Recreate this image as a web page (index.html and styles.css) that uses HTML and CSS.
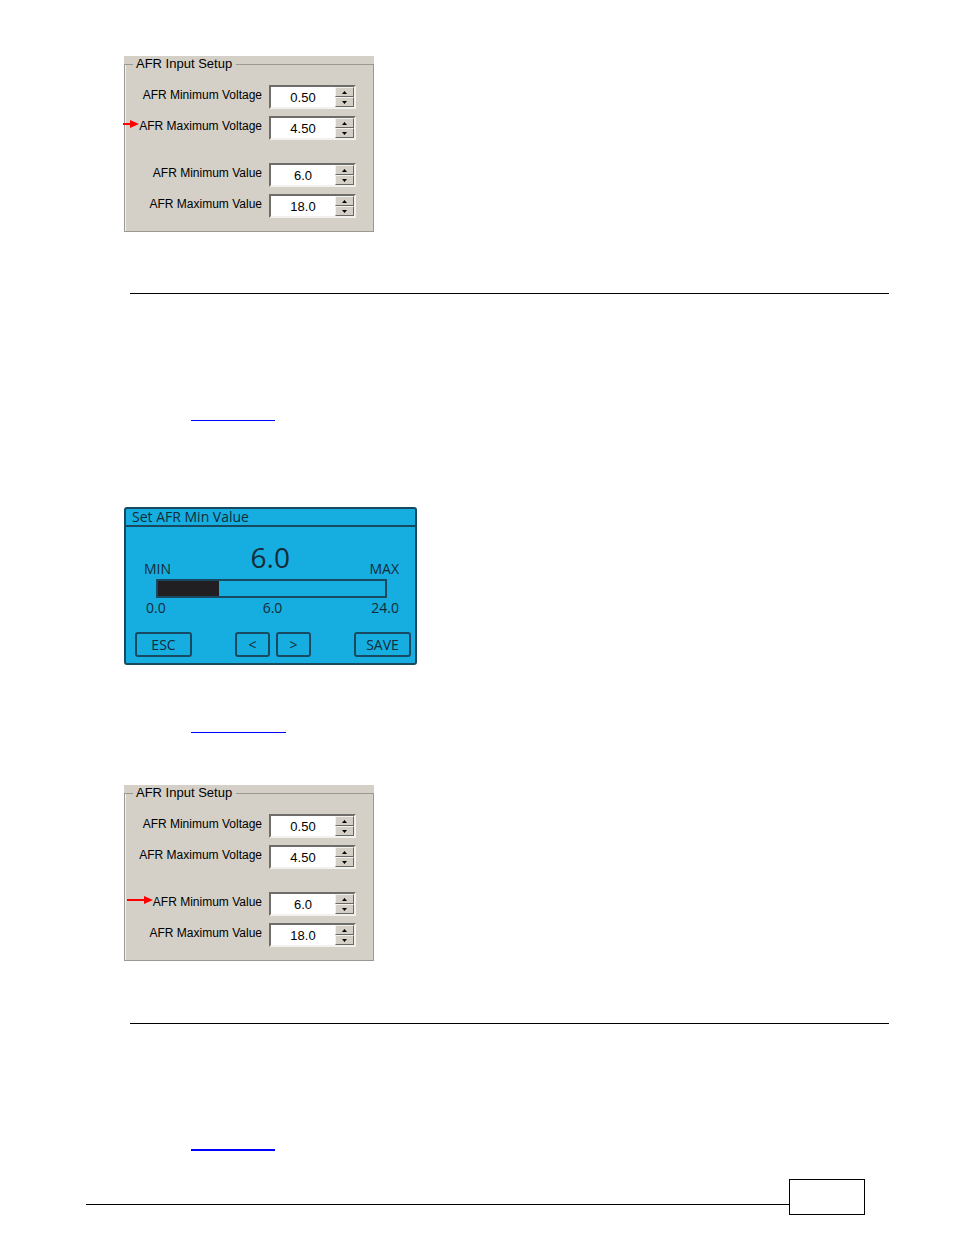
FILE: index.html
```html
<!DOCTYPE html>
<html lang="en">
<head>
<meta charset="utf-8">
<title>AFR Input Setup</title>
<link rel="stylesheet" href="styles.css">
</head>
<body>
<main class="page">
  <form class="panel">
    <fieldset class="group">
      <legend class="group-title">AFR Input Setup</legend>
      <div class="row">
        <label class="label" for="a1">AFR Minimum Voltage</label>
        <div class="spin"><input class="value" id="a1" type="text" value="0.50"><div class="steps"><button class="step" type="button" aria-label="Increase"><svg viewBox="0 0 5 3"><path d="M0 3L2.500 0L5 3Z"/></svg></button><button class="step" type="button" aria-label="Decrease"><svg viewBox="0 0 5 3"><path d="M0 0L2.500 3L5 0Z"/></svg></button></div></div>
      </div>
      <div class="row">
        <label class="label" for="a2"><svg class="arrow arrow-short" viewBox="0 0 16 8"><path d="M0 3H7V0L16 4L7 8V5H0Z"/></svg>AFR Maximum Voltage</label>
        <div class="spin"><input class="value" id="a2" type="text" value="4.50"><div class="steps"><button class="step" type="button" aria-label="Increase"><svg viewBox="0 0 5 3"><path d="M0 3L2.500 0L5 3Z"/></svg></button><button class="step" type="button" aria-label="Decrease"><svg viewBox="0 0 5 3"><path d="M0 0L2.500 3L5 0Z"/></svg></button></div></div>
      </div>
      <div class="row row-spaced">
        <label class="label" for="a3">AFR Minimum Value</label>
        <div class="spin"><input class="value" id="a3" type="text" value="6.0"><div class="steps"><button class="step" type="button" aria-label="Increase"><svg viewBox="0 0 5 3"><path d="M0 3L2.500 0L5 3Z"/></svg></button><button class="step" type="button" aria-label="Decrease"><svg viewBox="0 0 5 3"><path d="M0 0L2.500 3L5 0Z"/></svg></button></div></div>
      </div>
      <div class="row">
        <label class="label" for="a4">AFR Maximum Value</label>
        <div class="spin"><input class="value" id="a4" type="text" value="18.0"><div class="steps"><button class="step" type="button" aria-label="Increase"><svg viewBox="0 0 5 3"><path d="M0 3L2.500 0L5 3Z"/></svg></button><button class="step" type="button" aria-label="Decrease"><svg viewBox="0 0 5 3"><path d="M0 0L2.500 3L5 0Z"/></svg></button></div></div>
      </div>
    </fieldset>
  </form>

  <hr class="rule">
  <a class="link" href="#lcd" aria-label="LCD display"></a>

  <section class="lcd" id="lcd">
    <h2 class="lcd-title">Set AFR Min Value</h2>
    <div class="lcd-head"><span>MIN</span><output class="lcd-value">6.0</output><span>MAX</span></div>
    <div class="bar" role="meter" aria-label="AFR Min Value" aria-valuemin="0" aria-valuemax="24" aria-valuenow="6"><div class="bar-fill" style="width:27%"></div></div>
    <div class="lcd-scale"><span>0.0</span><span>6.0</span><span>24.0</span></div>
    <div class="lcd-actions">
      <button class="key" type="button">ESC</button>
      <div class="key-pair"><button class="key key-small" type="button">&lt;</button><button class="key key-small" type="button">&gt;</button></div>
      <button class="key" type="button">SAVE</button>
    </div>
  </section>

  <a class="link link-wide" href="#software" aria-label="Software setup"></a>

  <form class="panel" id="software">
    <fieldset class="group">
      <legend class="group-title">AFR Input Setup</legend>
      <div class="row">
        <label class="label" for="b1">AFR Minimum Voltage</label>
        <div class="spin"><input class="value" id="b1" type="text" value="0.50"><div class="steps"><button class="step" type="button" aria-label="Increase"><svg viewBox="0 0 5 3"><path d="M0 3L2.500 0L5 3Z"/></svg></button><button class="step" type="button" aria-label="Decrease"><svg viewBox="0 0 5 3"><path d="M0 0L2.500 3L5 0Z"/></svg></button></div></div>
      </div>
      <div class="row">
        <label class="label" for="b2">AFR Maximum Voltage</label>
        <div class="spin"><input class="value" id="b2" type="text" value="4.50"><div class="steps"><button class="step" type="button" aria-label="Increase"><svg viewBox="0 0 5 3"><path d="M0 3L2.500 0L5 3Z"/></svg></button><button class="step" type="button" aria-label="Decrease"><svg viewBox="0 0 5 3"><path d="M0 0L2.500 3L5 0Z"/></svg></button></div></div>
      </div>
      <div class="row row-spaced">
        <label class="label" for="b3"><svg class="arrow arrow-long" viewBox="0 0 26 8"><path d="M0 3H17V0L26 4L17 8V5H0Z"/></svg>AFR Minimum Value</label>
        <div class="spin"><input class="value" id="b3" type="text" value="6.0"><div class="steps"><button class="step" type="button" aria-label="Increase"><svg viewBox="0 0 5 3"><path d="M0 3L2.500 0L5 3Z"/></svg></button><button class="step" type="button" aria-label="Decrease"><svg viewBox="0 0 5 3"><path d="M0 0L2.500 3L5 0Z"/></svg></button></div></div>
      </div>
      <div class="row">
        <label class="label" for="b4">AFR Maximum Value</label>
        <div class="spin"><input class="value" id="b4" type="text" value="18.0"><div class="steps"><button class="step" type="button" aria-label="Increase"><svg viewBox="0 0 5 3"><path d="M0 3L2.500 0L5 3Z"/></svg></button><button class="step" type="button" aria-label="Decrease"><svg viewBox="0 0 5 3"><path d="M0 0L2.500 3L5 0Z"/></svg></button></div></div>
      </div>
    </fieldset>
  </form>

  <hr class="rule rule-last">
  <a class="link link-bold" href="#lcd" aria-label="LCD display"></a>
</main>
<footer class="footer"><div class="footer-line"></div><div class="page-box"></div></footer>
</body>
</html>
```

FILE: styles.css
```css
* { box-sizing: border-box; }
body {
  margin: 0;
  background: #fff;
  color: #000;
  font-family: "Liberation Sans", Arial, sans-serif;
  font-size: 13px;
}
.page { padding: 56px 65px 0 124px; }

/* Input setup group box */
.panel {
  width: 250px;
  background: #d4d0c8;
}
.group {
  margin: 0;
  min-width: 0;
  padding: 13px 17px 13px 10px;
  border: 1px solid #9a9893;
  box-shadow: inset 1px 0 #f4f2ee;
}
.group-title {
  padding: 0 4px 0 3px;
  margin-left: -2px;
  line-height: 16px;
}
.row {
  display: flex;
  justify-content: flex-end;
  gap: 7px;
  margin-bottom: 7px;
}
.row:last-child { margin-bottom: 0; }
.row-spaced { margin-top: 23px; }
.label {
  position: relative;
  font-size: 12px;
  line-height: 20px;
  white-space: nowrap;
}
.arrow {
  position: absolute;
  right: 100%;
  top: 4px;
  height: 8px;
  fill: #f00;
}
.arrow-short { width: 16px; }
.arrow-long { width: 26px; }
.spin {
  display: flex;
  width: 87px;
  height: 24px;
  background: #fff;
  border: 2px solid;
  border-color: #6f6d69 #f3f1ed #f3f1ed #6f6d69;
}
.value {
  flex: 1;
  min-width: 0;
  padding: 0;
  border: 0;
  background: transparent;
  color: inherit;
  font: inherit;
  text-align: center;
}
.steps {
  display: grid;
  width: 19px;
}
.step {
  display: grid;
  place-items: center;
  min-height: 0;
  padding: 0;
  border: 1px solid;
  border-color: #f4f2ee #6a6864 #6a6864 #f4f2ee;
  background: #d4d0c8;
}
.step svg { width: 5px; height: 3px; }

.rule {
  height: 1px;
  margin: 61px 0 0 6px;
  border: 0;
  background: #000;
}
.rule-last { margin-top: 62px; }
.link {
  display: block;
  width: 84px;
  height: 20px;
  margin: 107px 0 0 67px;
  border-bottom: 1px solid #00f;
}
.link-wide {
  width: 95px;
  margin-top: 48px;
}
.link-bold { border-bottom-width: 2px; }
.link-wide + .panel { margin-top: 52px; }

/* LCD screen */
.lcd {
  width: 293px;
  margin-top: 86px;
  border: 2px solid #174a60;
  border-radius: 3px;
  background: #16aee0;
  color: #142b38;
  font-family: "Open Sans", "Noto Sans", sans-serif;
  font-size: 14px;
}
.lcd-title {
  margin: 0;
  padding-left: 6px;
  border-bottom: 2px solid #174a60;
  font-size: 14px;
  font-weight: 400;
  line-height: 16px;
}
.lcd-head {
  display: flex;
  justify-content: space-between;
  align-items: flex-end;
  padding: 12px 16px 1px 18px;
  line-height: 16px;
}
.lcd-value {
  padding-bottom: 2px;
  font-size: 28px;
  line-height: 36px;
}
.bar {
  height: 19px;
  margin: 1px 28px 0 30px;
  border: 2px solid #174a60;
}
.bar-fill {
  height: 100%;
  background: #211f22;
}
.lcd-scale {
  display: grid;
  grid-template-columns: 1fr auto 1fr;
  padding: 2px 16px 0 20px;
  line-height: 16px;
}
.lcd-scale span:last-child { text-align: right; }
.lcd-actions {
  display: flex;
  justify-content: space-between;
  padding: 16px 4px 6px 9px;
}
.key {
  width: 57px;
  height: 25px;
  padding: 0;
  border: 2px solid #174a60;
  border-radius: 3px;
  background: transparent;
  color: inherit;
  font: inherit;
  line-height: 20px;
}
.key-small { width: 35px; }
.key-pair { display: flex; gap: 6px; }

.footer {
  display: flex;
  padding: 28px 89px 20px 86px;
}
.footer-line {
  flex: 1;
  height: 26px;
  border-bottom: 1px solid #000;
}
.page-box {
  width: 76px;
  height: 36px;
  border: 1px solid #000;
}
```
